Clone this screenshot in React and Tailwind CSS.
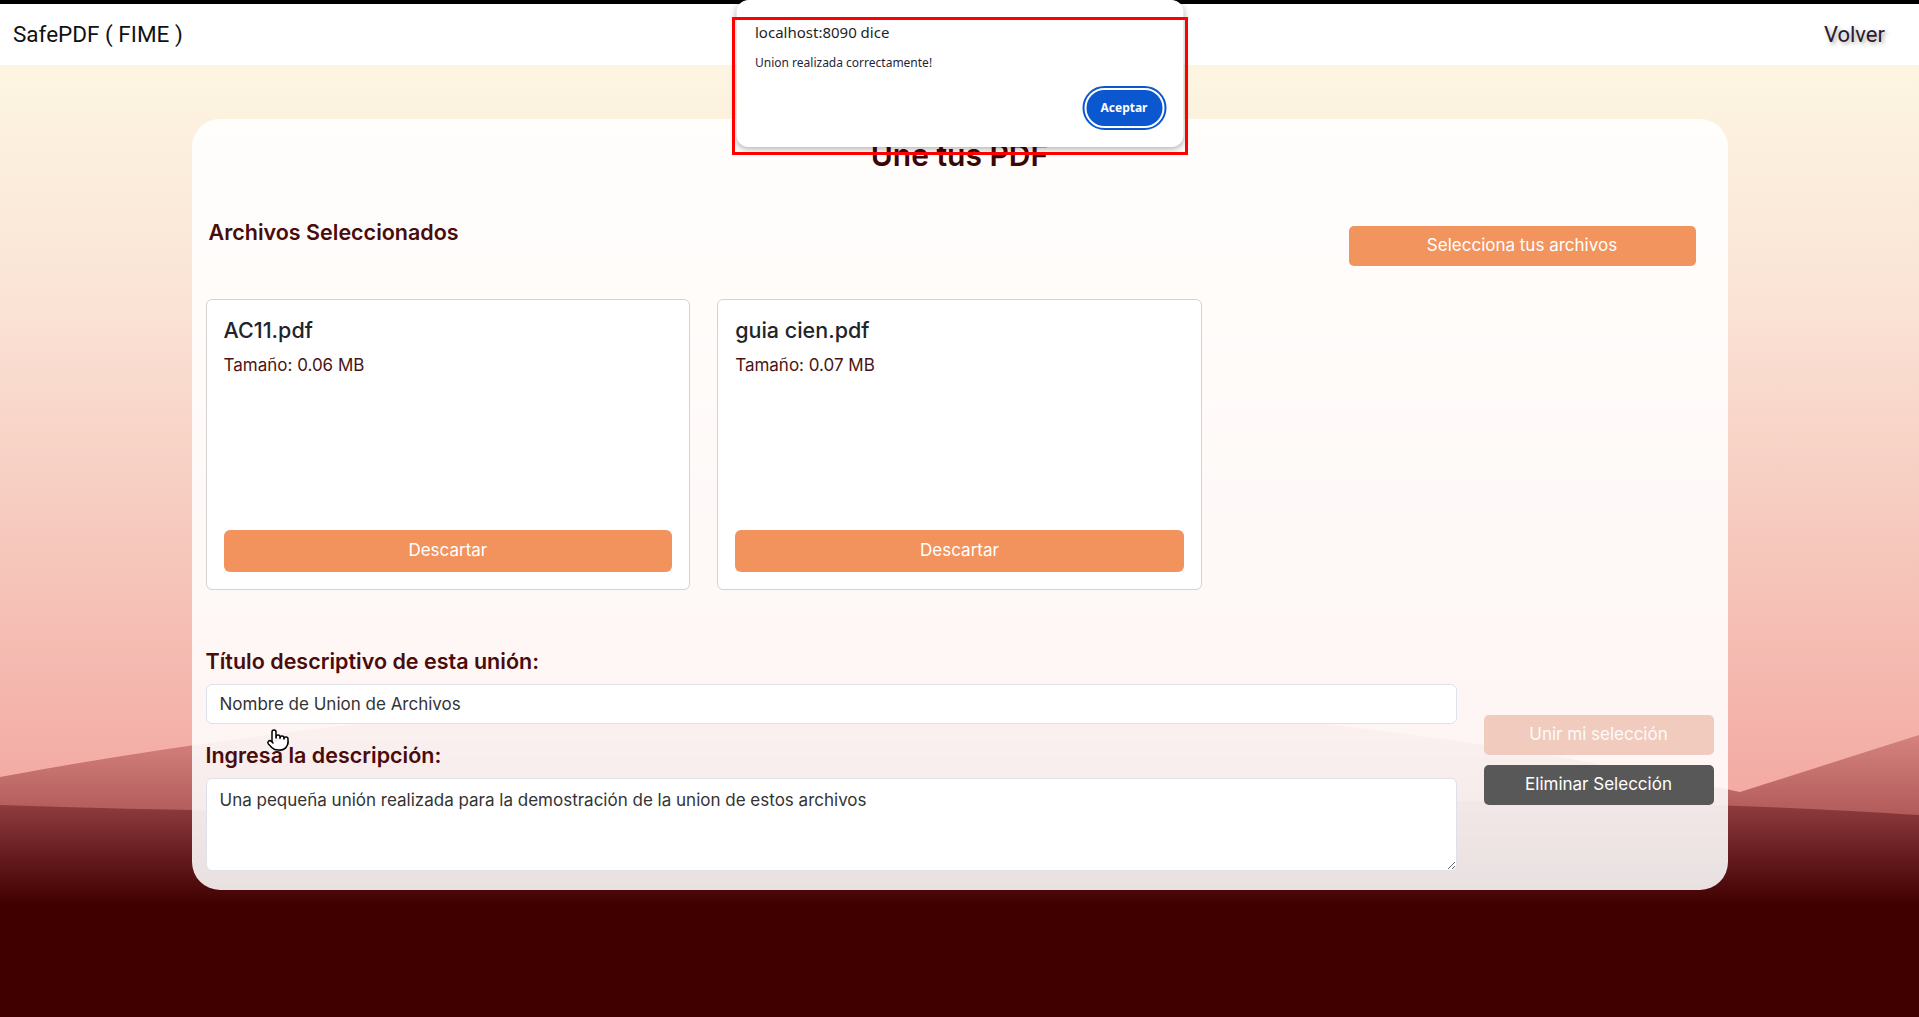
import React from "react";
import { Pointer } from "lucide-react";

const files = [
  { name: "AC11.pdf", size: "0.06" },
  { name: "guia cien.pdf", size: "0.07" },
];

// Fondo: degradado de cielo + ondas al pie
const Background = () => (
  <svg
    className="pointer-events-none absolute inset-0 h-full w-full"
    viewBox="0 0 1919 1017"
    preserveAspectRatio="none"
  >
    <defs>
      <linearGradient id="sky" x1="0" y1="0" x2="0" y2="1017" gradientUnits="userSpaceOnUse">
        <stop offset="0.064" stopColor="#fdf5e2" />
        <stop offset="0.3" stopColor="#fae3d5" />
        <stop offset="0.55" stopColor="#f6c6bb" />
        <stop offset="0.78" stopColor="#f3aaa3" />
      </linearGradient>
      <linearGradient id="hill" x1="0" y1="720" x2="0" y2="815" gradientUnits="userSpaceOnUse">
        <stop offset="0" stopColor="#dc8a85" />
        <stop offset="1" stopColor="#b15b5a" />
      </linearGradient>
      <linearGradient id="ground" x1="0" y1="805" x2="0" y2="905" gradientUnits="userSpaceOnUse">
        <stop offset="0" stopColor="#8f3c3e" />
        <stop offset="0.5" stopColor="#661c20" />
        <stop offset="1" stopColor="#400000" />
      </linearGradient>
    </defs>
    <rect x="0" y="0" width="1919" height="1017" fill="url(#sky)" />
    <path d="M0,777 Q900,610 1740,792 L1919,735 V1017 H0 Z" fill="url(#hill)" />
    <path d="M0,805 C400,818 800,815 1100,808 S1600,795 1919,815 V1017 H0 Z" fill="url(#ground)" />
  </svg>
);

const FileCard = ({ file }) => (
  <div className="flex h-[291px] flex-col rounded-md border border-[#d3d3d3] bg-white p-[17px]">
    <h3 className="text-[21.5px] leading-[26px] font-medium text-[#212529]">{file.name}</h3>
    <p className="mt-[12px] text-[17px] leading-5 text-[#4a1414]">Tamaño: {file.size} MB</p>
    <button className="mt-auto h-[42px] w-full rounded-md bg-[#f2935d] text-[17px] text-white">
      Descartar
    </button>
  </div>
);

export default function App() {
  return (
    <div className="relative min-h-screen w-full overflow-hidden font-['Inter',sans-serif]">
      <Background />

      <div className="relative h-1 bg-black" />
      <header className="relative flex h-[61px] items-center justify-between bg-white pr-[34px] pl-[13px] font-['Roboto',sans-serif]">
        <span className="text-[22.5px] text-[#111]">SafePDF ( FIME )</span>
        <a className="text-[22px] text-[#2d1a2d] [text-shadow:2px_2px_4px_rgba(0,0,0,0.35)]">Volver</a>
      </header>

      <main className="relative mx-auto mt-[54px] w-[1536px] rounded-[28px] bg-white/[0.88] px-[14px] pt-[18px] pb-[19px]">
        <h1 className="text-center text-[30px] leading-9 font-semibold text-[#3d0606]">Une tus PDF</h1>

        <div className="mt-[46px] flex items-start justify-between">
          <h2 className="ml-[3px] text-[21.5px] leading-[26px] font-semibold text-[#4a0b0b]">
            Archivos Seleccionados
          </h2>
          <button className="mt-[7px] mr-[18px] h-10 w-[347px] rounded-[5px] bg-[#f2945e] text-[17px] text-white">
            Selecciona tus archivos
          </button>
        </div>

        <div className="mt-[33px] grid grid-cols-3 gap-[27px]">
          {files.map((f) => (
            <FileCard key={f.name} file={f} />
          ))}
        </div>

        <div className="mt-[58px] flex items-center gap-[27px]">
          <div className="flex flex-1 flex-col">
            <label className="text-[21.5px] leading-[26px] font-semibold text-[#4a0b0b]">
              Título descriptivo de esta unión:
            </label>
            <input
              className="mt-[10px] h-10 w-full rounded-md border border-[#dee2e6] bg-white px-[13px] text-[17px] text-[#333]"
              defaultValue="Nombre de Union de Archivos"
            />
            <label className="mt-[18px] text-[21.5px] leading-[26px] font-semibold text-[#4a0b0b]">
              Ingresa la descripción:
            </label>
            <textarea
              className="mt-[10px] h-[93px] w-full rounded-md border border-[#dee2e6] bg-white px-[13px] pt-[10px] text-[17px] leading-[22px] text-[#333]"
              defaultValue="Una pequeña unión realizada para la demostración de la union de estos archivos"
            />
          </div>
          <div className="flex w-[230px] flex-col gap-[10px]">
            <button className="h-10 rounded-[5px] bg-[#f0cbbe] text-[17px] text-white/90">Unir mi selección</button>
            <button className="h-10 rounded-[5px] bg-[#585858] text-[17px] text-white">Eliminar Selección</button>
          </div>
        </div>
      </main>

      {/* cursor */}
      <Pointer className="absolute top-[728px] left-[266px] h-[24px] w-[24px] fill-white text-black" strokeWidth={1.5} />

      {/* alerta del navegador */}
      <div className="absolute top-0 left-1/2 h-[147px] w-[447px] -translate-x-1/2 rounded-xl bg-white px-[19px] pt-[22px] shadow-[0_2px_6px_rgba(0,0,0,0.3)] font-['Noto_Sans',sans-serif]">
        <p className="text-[15px] leading-5 text-[#1f1f1f]">localhost:8090 dice</p>
        <p className="mt-[13px] text-[12px] leading-4 text-[#1f1f3a]">Union realizada correctamente!</p>
        <div className="mt-[15px] flex justify-end">
          <div className="-mr-[2px] rounded-full border-2 border-[#0b57d0] p-[2px]">
            <button className="h-9 w-[76px] rounded-full bg-[#0b57d0] text-[12px] font-bold text-white">Aceptar</button>
          </div>
        </div>
      </div>
      <div className="absolute top-[17px] left-1/2 h-[138px] w-[456px] -translate-x-1/2 border-[3px] border-[#ff0000]" />
    </div>
  );
}
